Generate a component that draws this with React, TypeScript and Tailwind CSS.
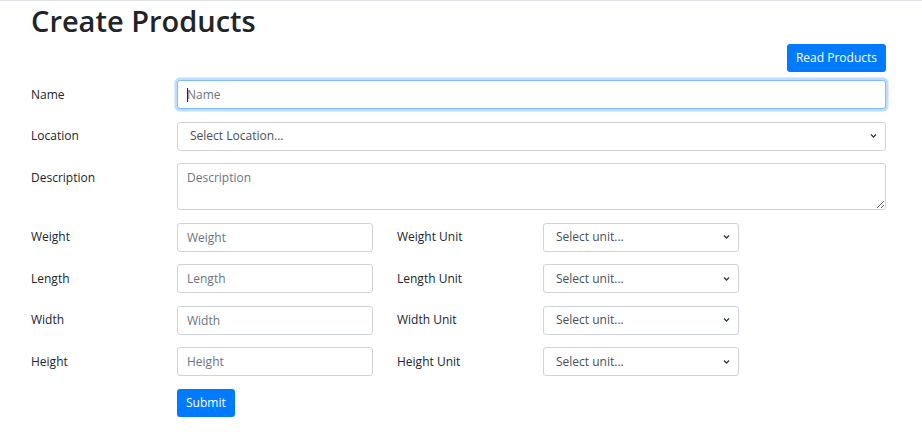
const font = { fontFamily: '"Open Sans", "Noto Sans", sans-serif' };

function Chevron() {
  return (
    <svg className="pointer-events-none absolute right-[9px] top-1/2 -translate-y-1/2" width="7" height="5" viewBox="0 0 7 5">
      <path d="M1 1 L3.5 3.5 L6 1" fill="none" stroke="#343a40" strokeWidth="1.4" />
    </svg>
  );
}

function Select({ label, w }: { label: string; w: string }) {
  return (
    <div className={`relative ${w}`}>
      <div className="h-[29px] rounded-[3px] border border-[#ced4da] bg-white pl-[12px] flex items-center text-[12px] text-[#495057]">
        {label}
      </div>
      <Chevron />
    </div>
  );
}

function Input({ ph }: { ph: string }) {
  return (
    <input
      placeholder={ph}
      className="h-[29px] w-[196px] rounded-[3px] border border-[#ced4da] bg-white px-[9px] text-[12px] placeholder:text-[#6c757d] outline-none"
    />
  );
}

const dims = ["Weight", "Length", "Width", "Height"];

export default function App() {
  return (
    <div className="min-h-screen bg-white text-[#212529] border-t border-[#dee2e6]" style={font}>
      <div className="pl-[31px] pr-[36px]">
        <h1 className="text-[29px] font-semibold leading-[36px] pt-[2px]">Create Products</h1>
        <div className="flex justify-end mt-[5px]">
          <button className="h-[28px] px-[9px] rounded-[3px] bg-[#007bff] text-white text-[12px]">Read Products</button>
        </div>

        <div className="mt-[8px] flex flex-col gap-[12.5px]">
          <div className="flex items-center">
            <label className="w-[146px] text-[12px]">Name</label>
            <div className="relative flex-1">
              <input
                placeholder="Name"
                className="h-[29px] w-full rounded-[3px] border border-[#80bdff] bg-white px-[9px] text-[12px] placeholder:text-[#6c757d] outline-none shadow-[0_0_0_2.5px_rgba(0,123,255,0.25)]"
              />
              <span className="absolute left-[10px] top-[8px] h-[14px] w-px bg-[#212529]" />
            </div>
          </div>

          <div className="flex items-center">
            <label className="w-[146px] text-[12px]">Location</label>
            <Select label="Select Location..." w="flex-1" />
          </div>

          <div className="flex items-start">
            <label className="w-[146px] text-[12px] pt-[6px]">Description</label>
            <textarea
              placeholder="Description"
              className="h-[47px] flex-1 resize-y rounded-[3px] border border-[#ced4da] bg-white px-[9px] py-[5px] text-[12px] placeholder:text-[#6c757d] outline-none"
            />
          </div>

          {dims.map((d) => (
            <div key={d} className="flex items-center">
              <label className="w-[146px] text-[12px]">{d}</label>
              <Input ph={d} />
              <label className="ml-[24px] w-[146px] text-[12px]">{d} Unit</label>
              <Select label="Select unit..." w="w-[196px]" />
            </div>
          ))}

          <div className="pl-[146px]">
            <button className="h-[28px] px-[9px] rounded-[3px] bg-[#007bff] text-white text-[12px]">Submit</button>
          </div>
        </div>
      </div>
    </div>
  );
}
